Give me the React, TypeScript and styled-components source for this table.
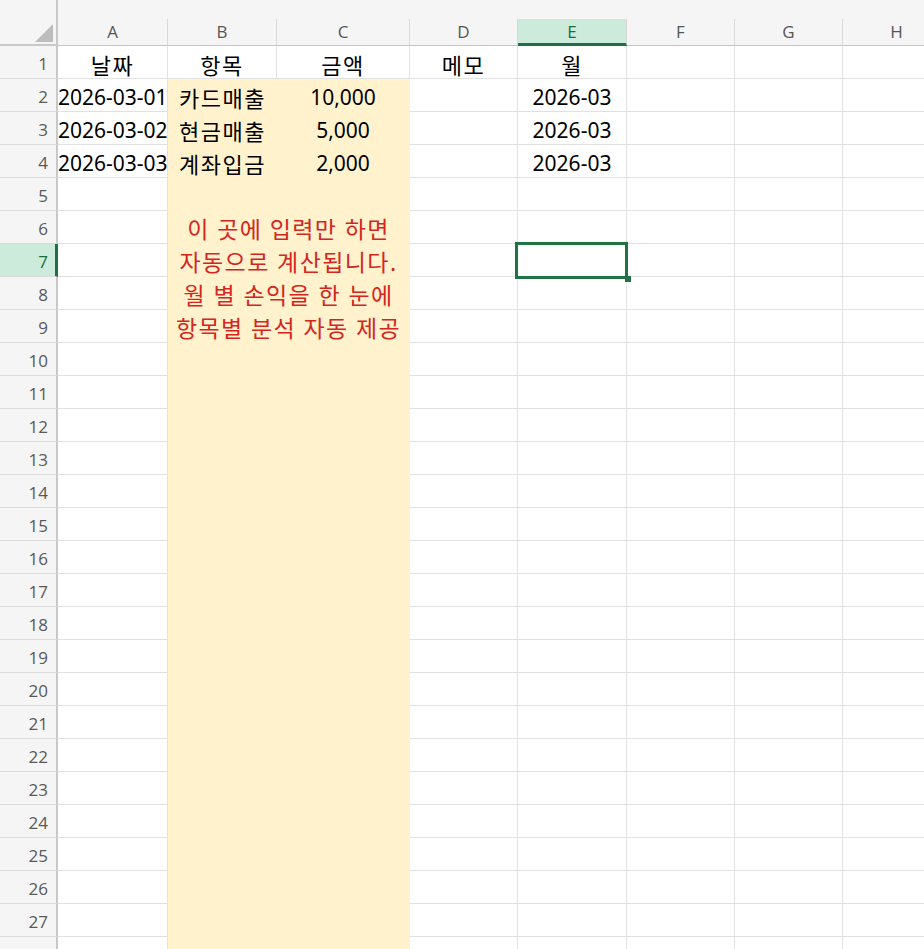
import React from "react";
import styled, { createGlobalStyle } from "styled-components";

const COLS = [58, 110, 109, 133, 108, 109, 108, 108, 108];
const TEMPLATE = COLS.map((w) => `${w}px`).join(" ");
const LETTERS = ["A", "B", "C", "D", "E", "F", "G", "H"];
const ACTIVE_COL = "E";
const ACTIVE_ROW = 7;
const FILL = "#fff2cc";
const GRID = "#e1e1e1";
const SEL = "#217346";

const GlobalStyle = createGlobalStyle`
  *, *::before, *::after { box-sizing: border-box; }
  html, body { margin: 0; padding: 0; background: #ffffff; overflow: hidden; }
  body { font-family: "Noto Sans", "Noto Sans CJK KR", sans-serif; }
`;

const Sheet = styled.div`
  width: 924px;
  height: 949px;
  overflow: hidden;
  background: #ffffff;
`;

const HeaderRow = styled.div`
  display: grid;
  grid-template-columns: ${TEMPLATE};
  height: 46px;
  background: #f5f5f5;
`;

const Corner = styled.div`
  display: flex;
  align-items: flex-end;
  justify-content: flex-end;
  padding: 0 3px 2px 0;
  border-right: 2px solid #c8c8c8;
  border-bottom: 2px solid #c8c8c8;
`;

const ColHead = styled.div<{ $active?: boolean }>`
  margin-top: 19px;
  height: 27px;
  display: flex;
  align-items: center;
  justify-content: center;
  padding-bottom: ${(p) => (p.$active ? "0" : "2px")};
  border-right: 1px solid #d9d9d9;
  border-bottom: ${(p) => (p.$active ? `3px solid #1e7145` : "1px solid #c4c4c4")};
  background: ${(p) => (p.$active ? "#cdebda" : "transparent")};
  color: ${(p) => (p.$active ? "#1b6b3f" : "#555555")};
  font-family: "Open Sans", "Noto Sans", sans-serif;
  font-size: 17px;
  line-height: 1;
`;

const Row = styled.div`
  display: grid;
  grid-template-columns: ${TEMPLATE};
  height: 33px;
`;

const RowHead = styled.div<{ $active?: boolean }>`
  display: flex;
  align-items: center;
  justify-content: flex-end;
  padding-top: 2px;
  padding-right: ${(p) => (p.$active ? "7px" : "8px")};
  background: ${(p) => (p.$active ? "#cdebda" : "#f5f5f5")};
  border-right: ${(p) => (p.$active ? "3px solid #1e7145" : "2px solid #c8c8c8")};
  border-bottom: 1px solid #dcdcdc;
  color: ${(p) => (p.$active ? "#1b6b3f" : "#595959")};
  font-family: "Open Sans", "Noto Sans", sans-serif;
  font-size: 17px;
  line-height: 1;
`;

type Align = "left" | "center";
type Tone = "num" | "ko" | "note";

const Cell = styled.div<{
  $fill?: boolean;
  $align?: Align;
  $span?: number;
  $indent?: number;
  $tone?: Tone;
  $selected?: boolean;
}>`
  position: relative;
  grid-column: span ${(p) => p.$span ?? 1};
  display: flex;
  align-items: center;
  justify-content: ${(p) => (p.$align === "center" ? "center" : "flex-start")};
  padding-left: ${(p) => p.$indent ?? 0}px;
  padding-top: 5px;
  background: ${(p) => (p.$fill ? FILL : "#ffffff")};
  border-right: 1px solid ${(p) => (p.$fill ? FILL : GRID)};
  border-bottom: 1px solid ${(p) => (p.$fill ? FILL : GRID)};
  white-space: nowrap;
  font-family: "Noto Sans", "Noto Sans CJK KR", sans-serif;
  font-size: ${(p) => (p.$tone === "note" ? "23px" : p.$tone === "ko" ? "22px" : "21px")};
  letter-spacing: ${(p) =>
    p.$tone === "ko" ? "1.5px" : p.$tone === "note" ? "1.4px" : "0"};
  line-height: 1;
  color: ${(p) => (p.$tone === "note" ? "#d3261f" : "#000000")};

  ${(p) =>
    p.$selected &&
    `
    &::after {
      content: "";
      position: absolute;
      left: -3px;
      top: -2px;
      right: -2px;
      bottom: -3px;
      border: 3px solid ${SEL};
      z-index: 2;
    }
  `}
`;

const FillHandle = styled.span`
  position: absolute;
  right: -5px;
  bottom: -6px;
  width: 6px;
  height: 6px;
  background: ${SEL};
  z-index: 3;
`;

type RowData = {
  a?: string;
  b?: string;
  c?: string;
  d?: string;
  e?: string;
  note?: string;
};

const DATA: Record<number, RowData> = {
  1: { a: "날짜", b: "항목", c: "금액", d: "메모", e: "월" },
  2: { a: "2026-03-01", b: "카드매출", c: "10,000", e: "2026-03" },
  3: { a: "2026-03-02", b: "현금매출", c: "5,000", e: "2026-03" },
  4: { a: "2026-03-03", b: "계좌입금", c: "2,000", e: "2026-03" },
  6: { note: "이 곳에 입력만 하면" },
  7: { note: "자동으로 계산됩니다." },
  8: { note: "월 별 손익을 한 눈에" },
  9: { note: "항목별 분석 자동 제공" },
};

const ROWS = Array.from({ length: 28 }, (_, i) => i + 1);

function CornerTriangle() {
  return (
    <svg width="18" height="18" viewBox="0 0 18 18">
      <polygon points="18,0 18,18 0,18" fill="#bdbdbd" />
    </svg>
  );
}

function SheetRow({ n }: { n: number }) {
  const d = DATA[n] ?? {};
  const isTitle = n === 1;
  const fill = n >= 2;
  const tone: Tone = isTitle ? "ko" : "num";
  return (
    <Row>
      <RowHead $active={n === ACTIVE_ROW}>{n}</RowHead>
      <Cell $align={isTitle ? "center" : "left"} $indent={0} $tone={tone}>
        {d.a}
      </Cell>
      {d.note ? (
        <Cell $fill $span={2} $align="center" $tone="note">
          {d.note}
        </Cell>
      ) : (
        <>
          <Cell
            $fill={fill}
            $align={isTitle ? "center" : "left"}
            $indent={isTitle ? 0 : 11}
            $tone="ko"
          >
            {d.b}
          </Cell>
          <Cell $fill={fill} $align="center" $tone={tone}>
            {d.c}
          </Cell>
        </>
      )}
      <Cell $align="center" $tone="ko">
        {d.d}
      </Cell>
      <Cell $align="center" $tone={tone} $selected={n === ACTIVE_ROW}>
        {d.e}
        {n === ACTIVE_ROW && <FillHandle />}
      </Cell>
      <Cell />
      <Cell />
      <Cell />
    </Row>
  );
}

export default function App() {
  return (
    <Sheet>
      <GlobalStyle />
      <HeaderRow>
        <Corner>
          <CornerTriangle />
        </Corner>
        {LETTERS.map((l) => (
          <ColHead key={l} $active={l === ACTIVE_COL}>
            {l}
          </ColHead>
        ))}
      </HeaderRow>
      {ROWS.map((n) => (
        <SheetRow key={n} n={n} />
      ))}
    </Sheet>
  );
}
